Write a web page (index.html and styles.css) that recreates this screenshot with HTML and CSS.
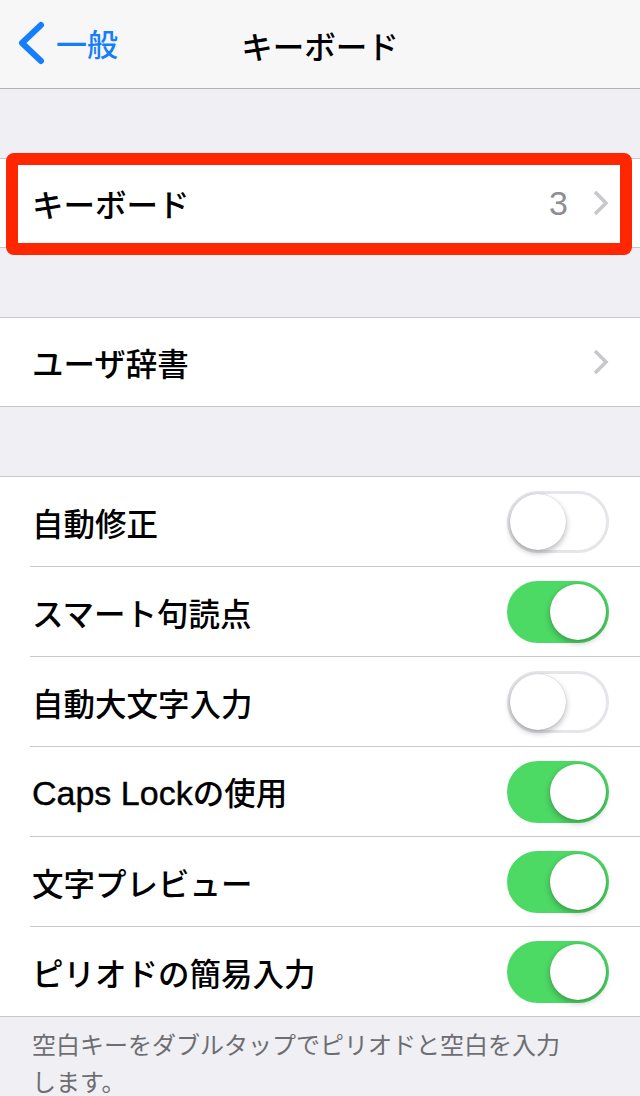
FILE: index.html
```html
<!DOCTYPE html>
<html lang="ja">
<head>
<meta charset="utf-8">
<title>キーボード</title>
<link rel="stylesheet" href="styles.css">
</head>
<body>
<header class="nav">
  <div class="back">
    <svg class="back-icon" width="30" height="44" viewBox="0 0 30 44"><polyline points="25,4 6,22 25,40" fill="none" stroke="#157efb" stroke-width="6" stroke-linecap="round" stroke-linejoin="round"/></svg>
    <span class="back-text">一般</span>
  </div>
  <div class="title">キーボード</div>
</header>

<main class="content">
  <section class="group group-first highlight-wrap">
    <div class="row">
      <div class="row-inner">
        <span class="label">キーボード</span>
        <span class="value">3</span>
        <svg class="chev" width="18" height="28" viewBox="0 0 18 28"><polyline points="3,3 14,14 3,25" fill="none" stroke="#c7c7cc" stroke-width="3.6"/></svg>
      </div>
    </div>
    <div class="highlight"></div>
  </section>

  <section class="group">
    <div class="row">
      <div class="row-inner">
        <span class="label">ユーザ辞書</span>
        <svg class="chev" width="18" height="28" viewBox="0 0 18 28"><polyline points="3,3 14,14 3,25" fill="none" stroke="#c7c7cc" stroke-width="3.6"/></svg>
      </div>
    </div>
  </section>

  <section class="group group-toggles">
    <div class="row tall">
      <div class="row-inner">
        <span class="label">自動修正</span>
        <span class="switch"><span class="knob"></span></span>
      </div>
    </div>
    <div class="row tall">
      <div class="row-inner">
        <span class="label">スマート句読点</span>
        <span class="switch on"><span class="knob"></span></span>
      </div>
    </div>
    <div class="row tall">
      <div class="row-inner">
        <span class="label">自動大文字入力</span>
        <span class="switch"><span class="knob"></span></span>
      </div>
    </div>
    <div class="row tall">
      <div class="row-inner">
        <span class="label"><span class="latin">Caps Lock</span>の使用</span>
        <span class="switch on"><span class="knob"></span></span>
      </div>
    </div>
    <div class="row tall">
      <div class="row-inner">
        <span class="label">文字プレビュー</span>
        <span class="switch on"><span class="knob"></span></span>
      </div>
    </div>
    <div class="row tall">
      <div class="row-inner">
        <span class="label">ピリオドの簡易入力</span>
        <span class="switch on"><span class="knob"></span></span>
      </div>
    </div>
  </section>

  <p class="footer">空白キーをダブルタップでピリオドと空白を入力<br>します。</p>
</main>
</body>
</html>
```

FILE: styles.css
```css
html, body {
  margin: 0;
  padding: 0;
}
body {
  background: #efeff4;
  font-family: "Liberation Sans", "Noto Sans CJK JP", sans-serif;
  color: #000;
  width: 640px;
  height: 1096px;
  overflow: hidden;
}

.nav {
  height: 88px;
  background: #f7f7f8;
  border-bottom: 1px solid #b2b2b6;
  display: flex;
  align-items: center;
  justify-content: center;
  position: relative;
}
.back {
  position: absolute;
  left: 16px;
  top: 21px;
  display: flex;
  align-items: center;
  gap: 10px;
}
.back-icon {
  display: block;
}
.back-text {
  color: #157efb;
  font-family: "Noto Sans CJK JP", sans-serif;
  font-size: 31px;
  font-weight: 500;
  line-height: 44px;
}
.title {
  font-family: "Noto Sans CJK JP", sans-serif;
  font-size: 31.5px;
  font-weight: 500;
  line-height: 44px;
  margin-top: 2px;
}

.content {
  display: flex;
  flex-direction: column;
}

.group {
  background: #fff;
  border-top: 1px solid #c8c7cc;
  border-bottom: 1px solid #c8c7cc;
  margin-top: 69px;
}

.highlight-wrap {
  position: relative;
}
.highlight {
  position: absolute;
  left: 6px;
  top: -6px;
  width: 626px;
  height: 102px;
  box-sizing: border-box;
  border: 12px solid #ff2600;
  border-radius: 8px;
}

.row {
  padding-left: 30px;
}
.row-inner {
  height: 88px;
  display: flex;
  align-items: center;
  padding-left: 2px;
  padding-right: 30px;
}
.row.tall .row-inner {
  height: 89px;
  border-bottom: 1px solid #c8c7cc;
  padding-right: 31px;
}
.row.tall:last-child .row-inner {
  border-bottom: none;
}

.label {
  flex: 1;
  font-family: "Noto Sans CJK JP", sans-serif;
  font-size: 31.5px;
  font-weight: 500;
  line-height: 40px;
  white-space: nowrap;
}
.latin {
  font-family: "Liberation Sans", sans-serif;
  font-size: 34px;
  -webkit-text-stroke: 0.4px #000;
}

.value {
  font-family: "Liberation Sans", sans-serif;
  font-size: 34px;
  color: #8e8e93;
  margin-right: 24px;
  line-height: 40px;
}
.chev {
  display: block;
}

.switch {
  width: 102px;
  height: 62px;
  box-sizing: border-box;
  border-radius: 31px;
  border: 3px solid #e5e5ea;
  background: #fff;
  display: flex;
  align-items: center;
  justify-content: flex-start;
}
.switch.on {
  background: #4cd964;
  border-color: #4cd964;
  justify-content: flex-end;
}
.knob {
  width: 56px;
  height: 56px;
  border-radius: 50%;
  background: #fff;
  box-shadow: 0 3px 6px rgba(0, 0, 0, 0.28), 0 0 1px rgba(0, 0, 0, 0.25);
}

.footer {
  margin: 0;
  padding: 8px 32px 0 32px;
  font-family: "Noto Sans CJK JP", sans-serif;
  font-size: 24px;
  line-height: 37px;
  color: #6d6d72;
}
```
